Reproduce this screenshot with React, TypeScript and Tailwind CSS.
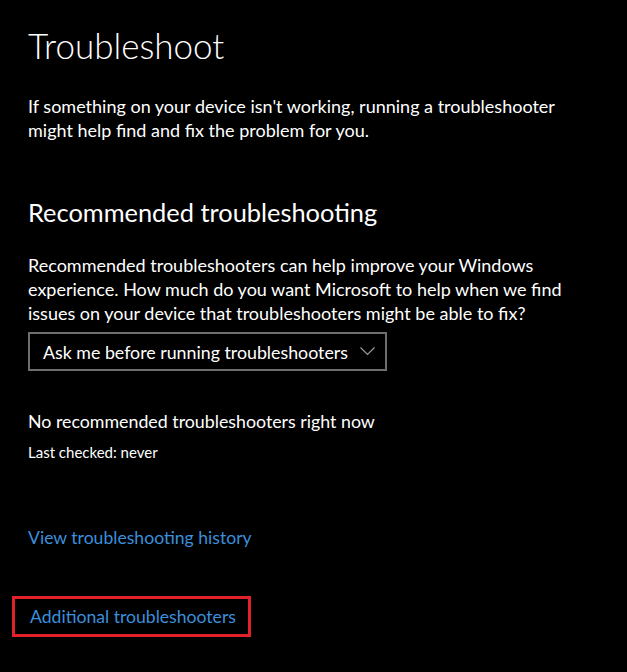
export default function App() {
  const font = { fontFamily: 'Lato, "Noto Sans", sans-serif' };
  return (
    <div className="w-[627px] h-[672px] bg-black text-white overflow-hidden pl-[28px] pt-[23px]" style={font}>
      <h1 className="text-[35px] leading-[44px] font-light">Troubleshoot</h1>
      <p className="mt-[27px] text-[18px] leading-[24px] w-[560px]">
        If something on your device isn't working, running a troubleshooter might help find and fix the problem for you.
      </p>
      <h2 className="mt-[53px] text-[25.4px] leading-[34px]">Recommended troubleshooting</h2>
      <p className="mt-[24px] text-[18px] leading-[24px] w-[560px]">
        Recommended troubleshooters can help improve your Windows experience. How much do you want Microsoft to help when we find issues on your device that troubleshooters might be able to fix?
      </p>
      <div className="mt-[7px] w-[359px] h-[39px] border-2 border-[#6e6e6e] flex items-center pl-[13px] pr-[10px] justify-between">
        <span className="text-[17.8px] leading-[24px] whitespace-nowrap">Ask me before running troubleshooters</span>
        <svg width="15" height="9" viewBox="0 0 15 9" fill="none">
          <path d="M0.5 0.5 L7.5 7.5 L14.5 0.5" stroke="#9a9a9a" strokeWidth="1.2" />
        </svg>
      </div>
      <p className="mt-[38px] text-[17.8px] leading-[24px]">No recommended troubleshooters right now</p>
      <p className="mt-[9px] text-[15px] leading-[20px]">Last checked: never</p>
      <p className="mt-[64px] text-[17.6px] leading-[24px] text-[#3b8fdc]">View troubleshooting history</p>
      <div className="mt-[46px] -ml-[16px] w-[239px] h-[41px] border-[3px] border-[#e3212b] flex items-center pl-[15px]">
        <span className="text-[17.6px] leading-[24px] text-[#3b8fdc] whitespace-nowrap">Additional troubleshooters</span>
      </div>
    </div>
  );
}
